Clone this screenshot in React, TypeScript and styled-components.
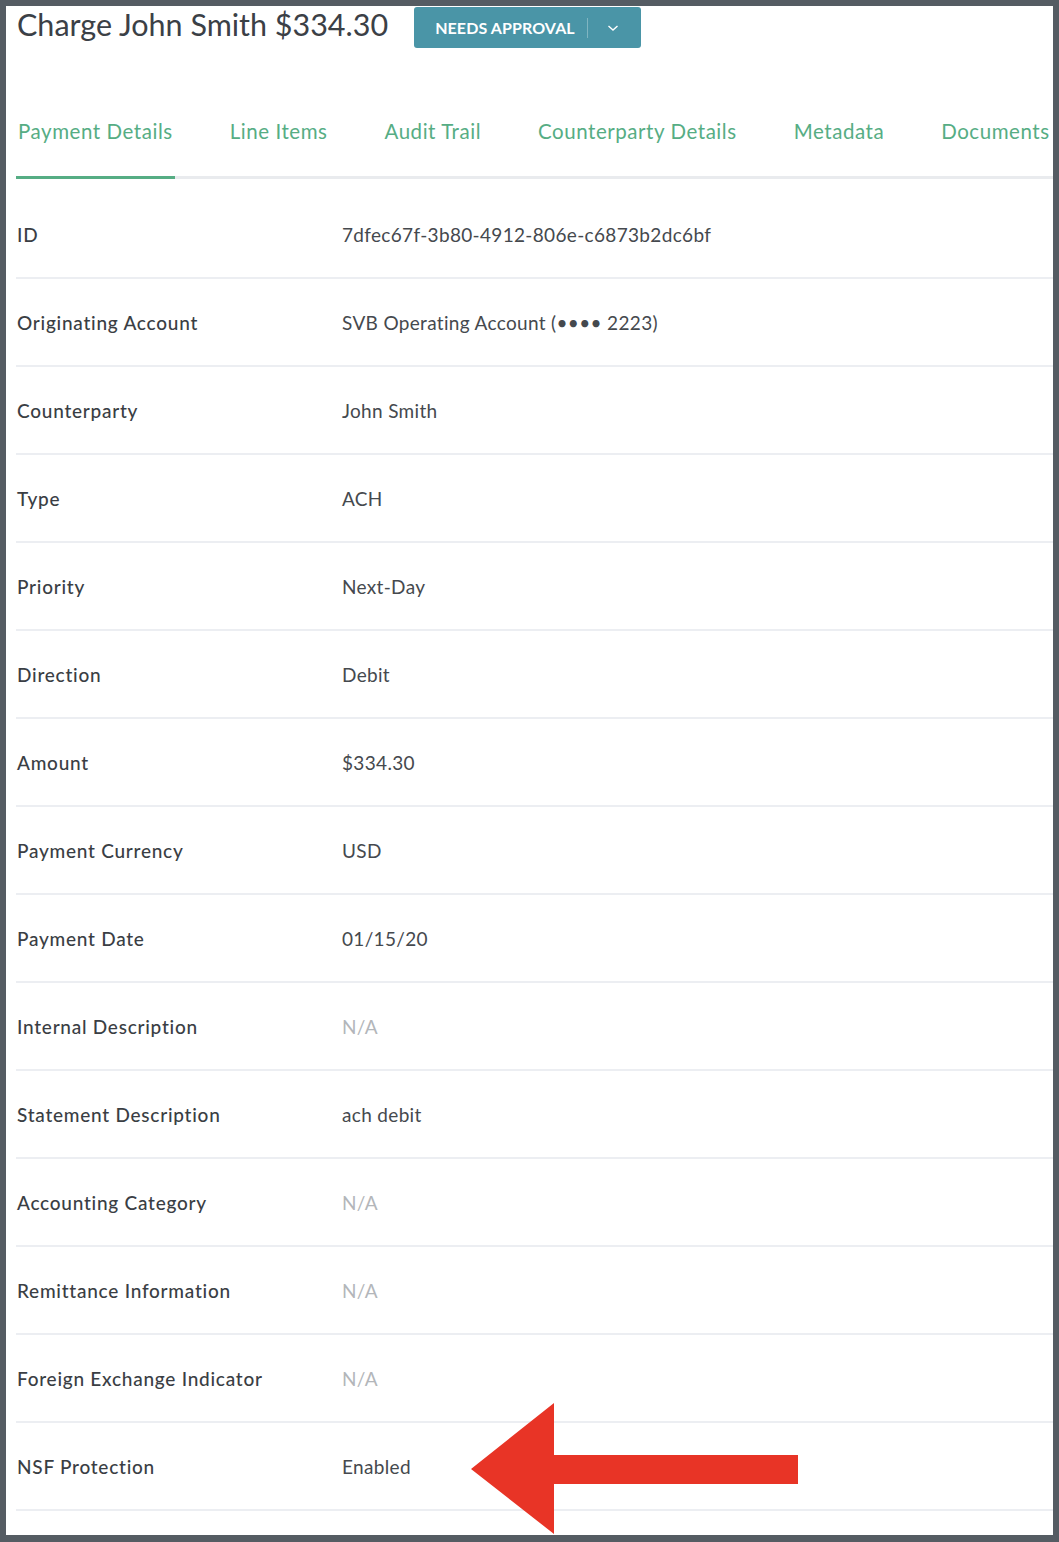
import React from "react";
import styled, { createGlobalStyle } from "styled-components";

const Global = createGlobalStyle`
  html, body { margin: 0; padding: 0; background: #555c63; }
  body { font-family: Lato, "Noto Sans", sans-serif; }
  * { box-sizing: border-box; }
`;

const Frame = styled.div`
  width: 1059px;
  height: 1542px;
  padding: 6px 6px 7px 6px;
  background: #555c63;
`;

const Page = styled.div`
  position: relative;
  height: 100%;
  background: #ffffff;
  padding-left: 10px;
  overflow: hidden;
`;

const Header = styled.div`
  display: flex;
  align-items: flex-start;
  height: 42px;
  margin-top: 1px;
  gap: 26px;
`;

const Title = styled.h1`
  margin: 0;
  font-size: 30.5px;
  line-height: 34px;
  font-weight: 400;
  color: #3b4046;
  padding-left: 1px;
  white-space: nowrap;
`;

const StatusButton = styled.button`
  display: flex;
  align-items: center;
  height: 41px;
  width: 227px;
  padding: 0 0 0 21px;
  border: none;
  border-radius: 3px;
  background: #4a95a7;
  color: #ffffff;
  font-family: Lato, sans-serif;
  font-weight: 700;
  font-size: 16px;
  letter-spacing: 0.1px;
`;

const ButtonLabel = styled.span`
  white-space: nowrap;
`;

const Divider = styled.span`
  width: 1px;
  height: 20px;
  margin-left: 12px;
  background: rgba(255, 255, 255, 0.3);
`;

const Chevron = styled.span`
  display: flex;
  margin-left: 19px;
`;

const TabBar = styled.div`
  display: flex;
  align-items: flex-end;
  gap: 53px;
  height: 130px;
  border-bottom: 3px solid #e9ebee;
  white-space: nowrap;
`;

const Tab = styled.div<{ $active?: boolean }>`
  font-size: 20.5px;
  line-height: 24px;
  letter-spacing: 0.55px;
  color: #56ad84;
  padding: 0 2px 33px 2px;
  margin-bottom: -3px;
  border-bottom: 3px solid ${(p) => (p.$active ? "#56ad84" : "transparent")};
`;

const List = styled.div`
  margin-top: 12px;
`;

const Row = styled.div`
  display: grid;
  grid-template-columns: 326px 1fr;
  align-items: center;
  height: 88px;
  padding-top: 1px;
  border-bottom: 2px solid #eceef2;
  font-size: 19px;
`;

const Label = styled.div`
  padding-left: 1px;
  color: #3a3e44;
  font-weight: 500;
  letter-spacing: 0.75px;
`;

const Value = styled.div<{ $muted?: boolean }>`
  color: ${(p) => (p.$muted ? "#b3b6ba" : "#45494e")};
  letter-spacing: 0.33px;
`;

const Arrow = styled.svg`
  position: absolute;
  left: 465px;
  top: 1385px;
`;

const rows: [string, string][] = [
  ["ID", "7dfec67f-3b80-4912-806e-c6873b2dc6bf"],
  ["Originating Account", "SVB Operating Account (•••• 2223)"],
  ["Counterparty", "John Smith"],
  ["Type", "ACH"],
  ["Priority", "Next-Day"],
  ["Direction", "Debit"],
  ["Amount", "$334.30"],
  ["Payment Currency", "USD"],
  ["Payment Date", "01/15/20"],
  ["Internal Description", "N/A"],
  ["Statement Description", "ach debit"],
  ["Accounting Category", "N/A"],
  ["Remittance Information", "N/A"],
  ["Foreign Exchange Indicator", "N/A"],
  ["NSF Protection", "Enabled"],
];

const tabs = [
  "Payment Details",
  "Line Items",
  "Audit Trail",
  "Counterparty Details",
  "Metadata",
  "Documents",
];

export default function App() {
  return (
    <>
      <Global />
      <Frame>
        <Page>
          <Header>
            <Title>Charge John Smith $334.30</Title>
            <StatusButton>
              <ButtonLabel>NEEDS APPROVAL</ButtonLabel>
              <Divider />
              <Chevron>
                <svg width="12" height="8" viewBox="0 0 12 8" fill="none">
                  <path d="M1.5 2 L6 6 L10.5 2" stroke="#fff" strokeWidth="1.4" />
                </svg>
              </Chevron>
            </StatusButton>
          </Header>
          <TabBar>
            {tabs.map((t, i) => (
              <Tab key={t} $active={i === 0}>
                {t}
              </Tab>
            ))}
          </TabBar>
          <List>
            {rows.map(([k, v]) => (
              <Row key={k}>
                <Label>{k}</Label>
                <Value $muted={v === "N/A"}>{v}</Value>
              </Row>
            ))}
          </List>
          <Arrow width="340" height="150" viewBox="0 0 340 150">
            <polygon
              points="0,78 83,12 83,64 327,64 327,93 83,93 83,143"
              fill="#e83426"
            />
          </Arrow>
        </Page>
      </Frame>
    </>
  );
}
